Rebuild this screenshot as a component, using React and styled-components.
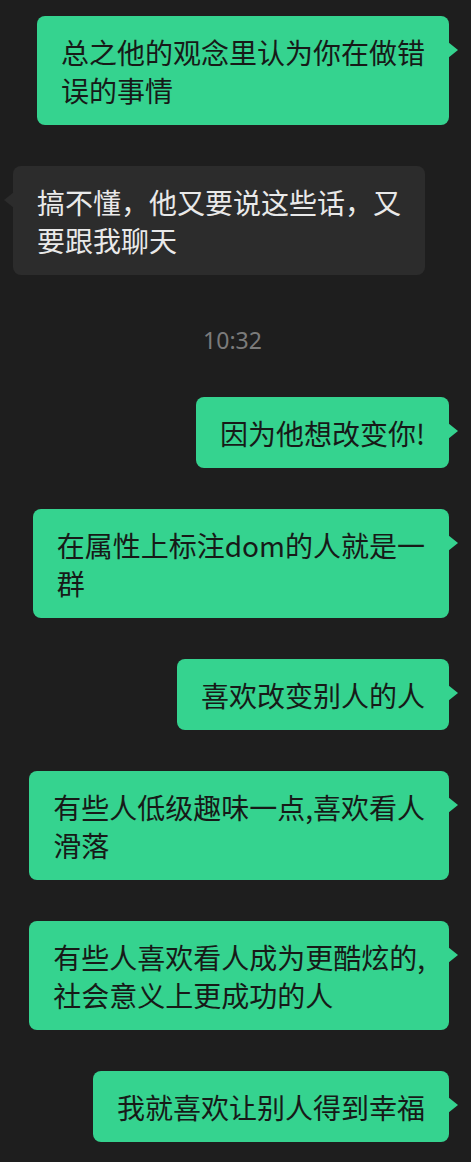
import React from 'react';
import styled, { createGlobalStyle, css } from 'styled-components';

const GlobalStyle = createGlobalStyle`
	html, body {
		margin: 0;
		padding: 0;
		background-color: #1e1e1e;
	}
	body {
		font-family: 'Noto Sans CJK SC', 'Noto Sans', sans-serif;
	}
`;

const StyledChat = styled.main`
	width: 471px;
	min-height: 1162px;
	box-sizing: border-box;
	padding: 16px 0 19px;
	display: flex;
	flex-direction: column;
	gap: 41px;
	background-color: #1e1e1e;
`;

const StyledRow = styled.div`
	display: flex;
	justify-content: ${({ side }) => (side === 'right' ? 'flex-end' : 'flex-start')};
	padding: 0 22px 0 13px;
`;

const StyledBubble = styled.div`
	position: relative;
	box-sizing: border-box;
	padding: 17px 24px 16px;
	border-radius: 8px;
	font-size: 28px;
	line-height: 38px;
	white-space: nowrap;
	background-color: ${({ side }) => (side === 'right' ? '#35d38f' : '#2c2c2c')};
	color: ${({ side }) => (side === 'right' ? '#171a18' : '#e9e9e9')};

	&::after {
		content: '';
		position: absolute;
		top: 26px;
		width: 10px;
		height: 16px;
		background-color: inherit;
		${({ side }) =>
			side === 'right'
				? css`
						right: -9px;
						clip-path: polygon(0 0, 100% 50%, 0 100%);
				  `
				: css`
						left: -9px;
						clip-path: polygon(100% 0, 0 50%, 100% 100%);
				  `}
	}
`;

const StyledLine = styled.span`
	display: block;
`;

const StyledTime = styled.div`
	height: 40px;
	box-sizing: border-box;
	padding: 10px 6px 0 0;
	text-align: center;
	font-family: 'Noto Sans', 'Noto Sans CJK SC', sans-serif;
	font-size: 23px;
	line-height: 28px;
	color: #7b7b7b;
`;

const messages = [
	{ side: 'right', lines: ['总之他的观念里认为你在做错', '误的事情'] },
	{ side: 'left', lines: ['搞不懂，他又要说这些话，又', '要跟我聊天'] },
	{ time: '10:32' },
	{ side: 'right', lines: ['因为他想改变你!'] },
	{ side: 'right', lines: ['在属性上标注dom的人就是一', '群'] },
	{ side: 'right', lines: ['喜欢改变别人的人'] },
	{ side: 'right', lines: ['有些人低级趣味一点,喜欢看人', '滑落'] },
	{ side: 'right', lines: ['有些人喜欢看人成为更酷炫的,', '社会意义上更成功的人'] },
	{ side: 'right', lines: ['我就喜欢让别人得到幸福'] },
];

const App = () => {
	return (
		<>
			<GlobalStyle />
			<StyledChat>
				{messages.map((msg, i) =>
					msg.time ? (
						<StyledTime key={i}>{msg.time}</StyledTime>
					) : (
						<StyledRow key={i} side={msg.side}>
							<StyledBubble side={msg.side}>
								{msg.lines.map((line, j) => (
									<StyledLine key={j}>{line}</StyledLine>
								))}
							</StyledBubble>
						</StyledRow>
					)
				)}
			</StyledChat>
		</>
	);
};

export default App;
